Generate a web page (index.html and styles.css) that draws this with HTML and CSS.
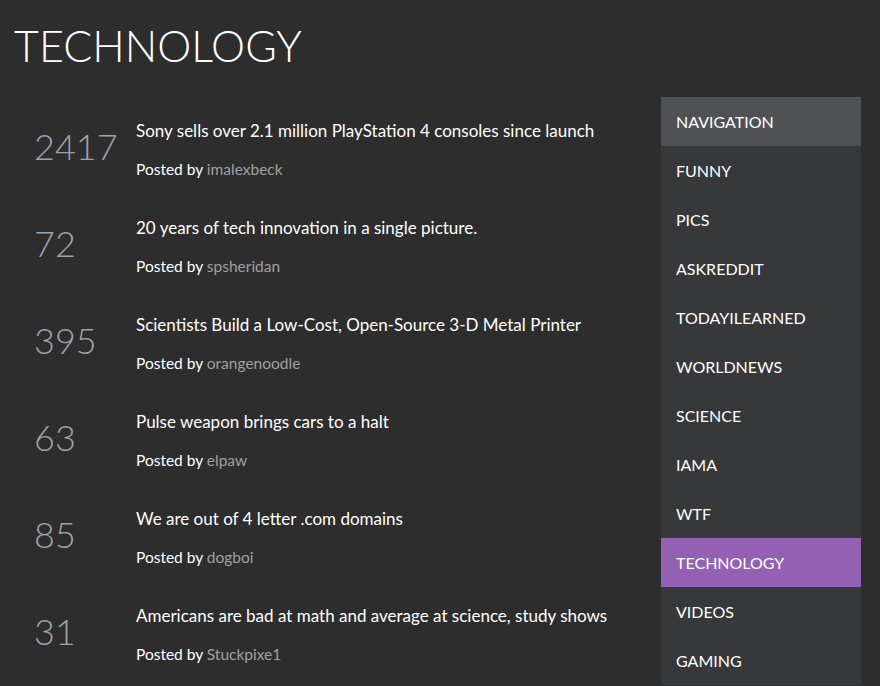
FILE: index.html
```html
<!DOCTYPE html>
<html>
<head>
<meta charset="utf-8">
<link rel="stylesheet" href="styles.css">
</head>
<body>
<h1 class="page-title">TECHNOLOGY</h1>
<div class="layout">
  <div class="posts">
    <div class="post">
      <div class="score">2417</div>
      <div class="post-body">
        <div class="post-title">Sony sells over 2.1 million PlayStation 4 consoles since launch</div>
        <div class="post-meta">Posted by <span class="user">imalexbeck</span></div>
      </div>
    </div>
    <div class="post">
      <div class="score">72</div>
      <div class="post-body">
        <div class="post-title">20 years of tech innovation in a single picture.</div>
        <div class="post-meta">Posted by <span class="user">spsheridan</span></div>
      </div>
    </div>
    <div class="post">
      <div class="score">395</div>
      <div class="post-body">
        <div class="post-title">Scientists Build a Low-Cost, Open-Source 3-D Metal Printer</div>
        <div class="post-meta">Posted by <span class="user">orangenoodle</span></div>
      </div>
    </div>
    <div class="post">
      <div class="score">63</div>
      <div class="post-body">
        <div class="post-title">Pulse weapon brings cars to a halt</div>
        <div class="post-meta">Posted by <span class="user">elpaw</span></div>
      </div>
    </div>
    <div class="post">
      <div class="score">85</div>
      <div class="post-body">
        <div class="post-title">We are out of 4 letter .com domains</div>
        <div class="post-meta">Posted by <span class="user">dogboi</span></div>
      </div>
    </div>
    <div class="post">
      <div class="score">31</div>
      <div class="post-body">
        <div class="post-title">Americans are bad at math and average at science, study shows</div>
        <div class="post-meta">Posted by <span class="user">Stuckpixe1</span></div>
      </div>
    </div>
  </div>
  <nav class="sidebar">
    <div class="nav-item nav-header">NAVIGATION</div>
    <div class="nav-item">FUNNY</div>
    <div class="nav-item">PICS</div>
    <div class="nav-item">ASKREDDIT</div>
    <div class="nav-item">TODAYILEARNED</div>
    <div class="nav-item">WORLDNEWS</div>
    <div class="nav-item">SCIENCE</div>
    <div class="nav-item">IAMA</div>
    <div class="nav-item">WTF</div>
    <div class="nav-item active">TECHNOLOGY</div>
    <div class="nav-item">VIDEOS</div>
    <div class="nav-item">GAMING</div>
  </nav>
</div>
</body>
</html>
```

FILE: styles.css
```css
html, body {
  margin: 0;
  padding: 0;
  background: #2d2d2d;
  font-family: Lato, "Open Sans", sans-serif;
  color: #ffffff;
  overflow: hidden;
}

.page-title {
  margin: 0;
  padding: 21px 0 0 14px;
  height: 97px;
  box-sizing: border-box;
  font-size: 43px;
  font-weight: 300;
  line-height: 50px;
}

.layout {
  display: flex;
  align-items: flex-start;
}

.posts {
  flex: 1;
  padding-top: 4px;
}

.post {
  display: flex;
  align-items: center;
  height: 97px;
}

.score {
  width: 102px;
  padding-left: 34px;
  font-size: 36px;
  font-weight: 300;
  color: #9ea3ab;
  line-height: 48px;
  margin-top: -8px;
}

.post-body {
  display: flex;
  flex-direction: column;
  gap: 14px;
}

.post-title {
  font-size: 17px;
  line-height: 24px;
  color: #ffffff;
}

.post-meta {
  font-size: 15.5px;
  line-height: 24px;
  color: #ffffff;
}

.user {
  color: #a0a0a0;
}

.sidebar {
  width: 200px;
  margin-right: 19px;
  background: #37383a;
}

.nav-item {
  height: 49px;
  line-height: 49px;
  padding-left: 15px;
  font-size: 16px;
  color: #ffffff;
}

.nav-header {
  background: #505155;
}

.nav-item.active {
  background: #9360b4;
}
```
